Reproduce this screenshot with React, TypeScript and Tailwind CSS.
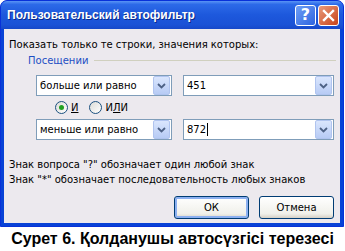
export default function App() {
  const ui = { fontFamily: '"DejaVu Sans", Tahoma, sans-serif' };
  return (
    <div className="w-[345px] h-[251px] bg-white flex flex-col" style={ui}>
      <div className="w-[344px] h-[227px] flex flex-col rounded-t-[7px] bg-[#0842d6] px-[3px] pb-[3px] border border-[#0831d9]">
        <TitleBar />
        <div className="flex-1 bg-[#ece9ee] flex flex-col text-[10px] text-black">
          <div className="pl-[5px] pt-[9px] leading-[13px]">
            Показать только те строки, значения которых:
          </div>
          <div className="flex items-center pl-[24px] pr-[4px] mt-[3px]">
            <span className="text-[#1d4fc4] leading-[13px]">Посещении</span>
            <div className="flex-1 h-px bg-[#d0d0bf] ml-[6px]" />
          </div>
          <div className="flex gap-[11px] pl-[32px] mt-[8px]">
            <Combo text="больше или равно" w="w-[136px]" />
            <Combo text="451" w="w-[151px]" />
          </div>
          <div className="flex items-center gap-[11px] pl-[51px] mt-[3px] h-[17px]">
            <Radio checked label="И" />
            <Radio label="ИЛИ" u={1} />
          </div>
          <div className="flex gap-[11px] pl-[32px] mt-[3px]">
            <Combo text="меньше или равно" w="w-[136px]" />
            <Combo text="872" w="w-[151px]" caret />
          </div>
          <div className="pl-[5px] mt-[17px] leading-[15px]">
            <div>Знак вопроса "?" обозначает один любой знак</div>
            <div>Знак "*" обозначает последовательность любых знаков</div>
          </div>
          <div className="flex justify-end gap-[10px] pr-[6px] mt-[9px]">
            <Btn label="ОК" def />
            <Btn label="Отмена" />
          </div>
        </div>
      </div>
      <div
        className="flex-1 flex items-center justify-center text-[16px] font-bold text-black"
        style={{ fontFamily: '"Liberation Sans", Arial, sans-serif' }}
      >
        Сурет 6. Қолданушы автосүзгісі терезесі
      </div>
    </div>
  );
}

function TitleBar() {
  return (
    <div className="h-[28px] -mx-[3px] flex items-center pl-[6px] pr-[4px] rounded-t-[6px] bg-[linear-gradient(#5a94f5_0%,#2c6ae8_12%,#1d58dc_50%,#1a52d6_85%,#1648c9_100%)]">
      <span
        className="flex-1 text-white font-bold text-[12px] [text-shadow:1px_1px_0_#0a2a8a]"
        style={{ fontFamily: '"Liberation Sans", Arial, sans-serif' }}
      >
        Пользовательский автофильтр
      </span>
      <div className="flex gap-[2px]">
        <div className="w-[21px] h-[21px] rounded-[3px] border border-white flex items-center justify-center bg-[linear-gradient(135deg,#6f9ff5,#2d63e0)] text-white font-bold text-[16px] leading-none">
          ?
        </div>
        <div className="w-[21px] h-[21px] rounded-[3px] border border-white flex items-center justify-center bg-[linear-gradient(135deg,#e99a7a,#c9431a)]">
          <svg width="13" height="13" viewBox="0 0 13 13">
            <path d="M2 2 L11 11 M11 2 L2 11" stroke="white" strokeWidth="2.4" strokeLinecap="square" />
          </svg>
        </div>
      </div>
    </div>
  );
}

function Combo({ text, w, caret }: { text: string; w: string; caret?: boolean }) {
  return (
    <div className={`${w} h-[21px] bg-white border border-[#7f9db9] flex items-center`}>
      <span className="flex-1 pl-[3px] leading-none flex items-center">
        {text}
        {caret && <span className="w-px h-[13px] bg-black ml-px" />}
      </span>
      <div className="w-[17px] h-[19px] mr-px bg-[linear-gradient(#dae6fd,#b7cbf5)] border border-[#b0c4ef] rounded-[2px] flex items-center justify-center">
        <svg width="9" height="6" viewBox="0 0 9 6">
          <path d="M1 1 L4.5 4.5 L8 1" stroke="#4d6185" strokeWidth="1.8" fill="none" />
        </svg>
      </div>
    </div>
  );
}

function Radio({ label, checked, u = 0 }: { label: string; checked?: boolean; u?: number }) {
  return (
    <div className="flex items-center gap-[3px]">
      <div className="w-[13px] h-[13px] rounded-full border border-[#1c5180] bg-[linear-gradient(135deg,#dcdcd7,#ffffff)] flex items-center justify-center">
        {checked && <div className="w-[5px] h-[5px] rounded-full bg-[#21a121]" />}
      </div>
      <span>
        {label.split("").map((c, i) => (
          <span key={i} className={i === u ? "underline" : ""}>
            {c}
          </span>
        ))}
      </span>
    </div>
  );
}

function Btn({ label, def }: { label: string; def?: boolean }) {
  return (
    <div
      className={`w-[75px] h-[23px] rounded-[3px] border border-[#003c74] flex items-center justify-center bg-[linear-gradient(#ffffff,#f0f0ea_80%,#d6d0c5)] ${
        def ? "shadow-[inset_0_0_0_2px_#8cb0f0]" : ""
      }`}
    >
      {label}
    </div>
  );
}
